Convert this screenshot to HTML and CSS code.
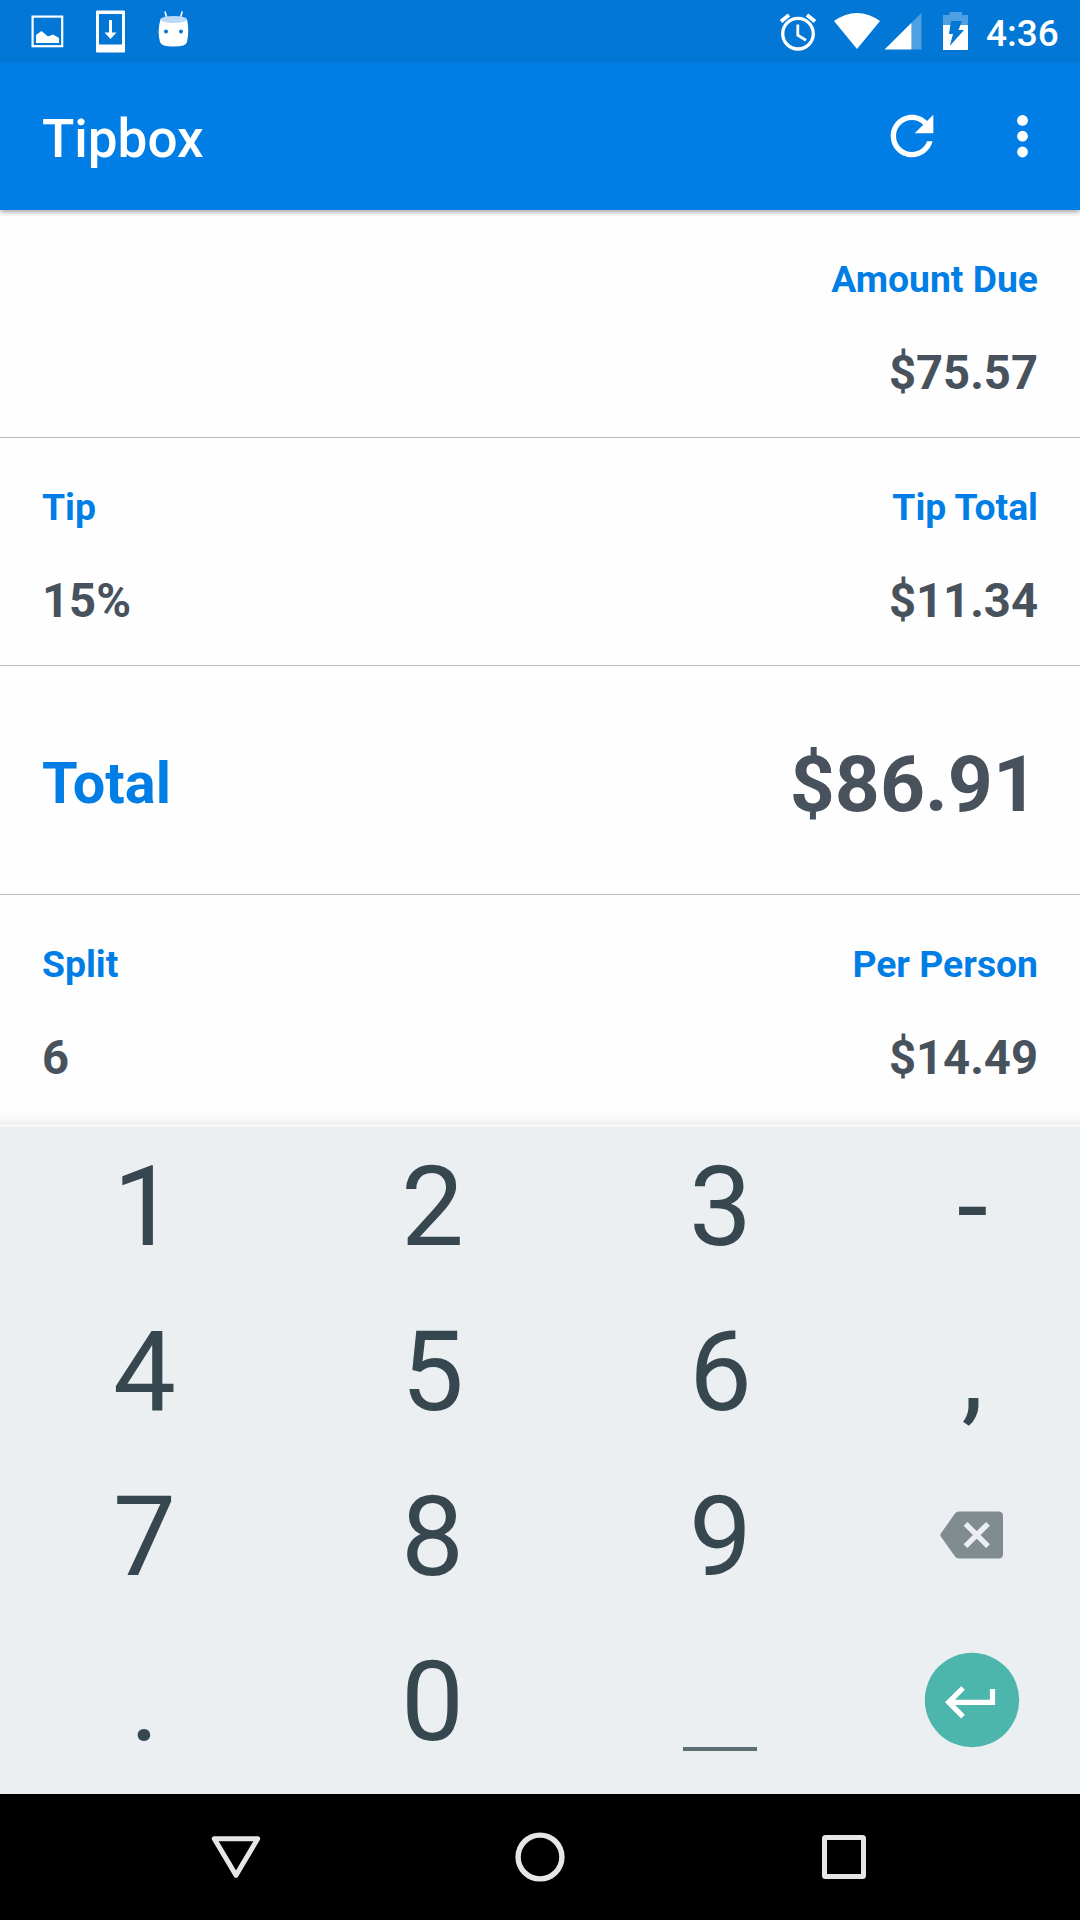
FILE: index.html
```html
<!DOCTYPE html>
<html lang="en">
<head>
<meta charset="utf-8">
<title>Tipbox</title>
<link rel="stylesheet" href="styles.css">
</head>
<body>
<div class="screen">
  <header class="header">
    <div class="status">
      <svg class="st-picture" width="34" height="63" viewBox="31 0 34 63">
        <rect x="32.6" y="16.6" width="29.6" height="29.6" fill="none" stroke="#fff" stroke-width="2.2"/>
        <path fill="#fff" d="M36 35L41.5 31L48 36.5L53 34.5L59 38V43H36Z"/>
      </svg>
      <svg class="st-download" width="30" height="63" viewBox="96 0 30 63">
        <path fill="#fff" fill-rule="evenodd" d="M97 10.5H124Q125 10.5 125 11.5V51.5Q125 52.5 124 52.5H97Q96 52.5 96 51.5V11.5Q96 10.5 97 10.5ZM99 14V44.5H122V14Z"/>
        <path fill="#fff" d="M109 20H112V32.5H116.5L110.5 39L104.5 32.5H109Z"/>
      </svg>
      <svg class="st-robot" width="32" height="63" viewBox="158 0 32 63">
        <path d="M165 11.5L167 19M182.3 11.5L180 19" stroke="#fff" stroke-width="1.6"/>
        <path fill="#fff" d="M160.5 19Q173.5 24 187 19Q189.5 31 187 42Q186 46.5 173.5 46.5Q161 46.5 160 42Q157 31 160.5 19Z"/>
        <ellipse cx="173.7" cy="19.5" rx="13.2" ry="3.4" fill="#bcdaf5"/>
        <circle cx="166" cy="31.5" r="2" fill="#0377d6"/>
        <circle cx="181" cy="31.5" r="2" fill="#0377d6"/>
      </svg>
      <svg class="st-alarm" width="36" height="63" viewBox="780 0 36 63">
        <g fill="none" stroke="#fff">
          <circle cx="798" cy="33.7" r="15.3" stroke-width="3.3"/>
          <path stroke-width="3.8" d="M781 21.5L789 15M807 15L815 21.5"/>
          <path stroke-width="2.8" d="M797.8 24.5V35.3L806 40.2"/>
        </g>
      </svg>
      <svg class="st-wifi" width="46" height="63" viewBox="834 0 46 63">
        <path fill="#fff" d="M834 21Q857 5 880 21L857 49Z"/>
      </svg>
      <svg class="st-signal" width="38" height="63" viewBox="884 0 38 63">
        <path fill="#fff" d="M884.5 49.5L911.5 22.8V49.5Z"/>
        <path fill="#fff" opacity=".3" d="M911.5 22.8L921.5 13V49.5H911.5Z"/>
      </svg>
      <svg class="st-battery" width="26" height="63" viewBox="943 0 26 63">
        <path fill="#fff" opacity=".3" d="M943 15H949.5V12H962V15H968V25H943Z"/>
        <path fill="#fff" d="M943 25H968V50H943Z"/>
        <path fill="#0377d6" d="M951 21H962L958.5 30H964L949.8 46L953 34H949Z"/>
      </svg>
      <span class="clock">4:36</span>
    </div>
    <div class="appbar">
      <h1 class="title">Tipbox</h1>
      <svg class="refresh" width="64" height="64" viewBox="0 0 24 24"><path fill="#fff" d="M17.65 6.35C16.2 4.9 14.21 4 12 4c-4.42 0-7.99 3.58-7.99 8s3.57 8 7.99 8c3.73 0 6.84-2.55 7.73-6h-2.08c-.82 2.33-3.04 4-5.65 4-3.31 0-6-2.69-6-6s2.69-6 6-6c1.66 0 3.14.69 4.22 1.78L13 11h7V4l-2.35 2.35z"/></svg>
      <svg class="more" width="13" height="64" viewBox="0 0 13 64"><g fill="#fff"><circle cx="6.5" cy="16.4" r="5.4"/><circle cx="6.5" cy="32.2" r="5.4"/><circle cx="6.5" cy="48" r="5.4"/></g></svg>
    </div>
  </header>

  <main class="rows">
    <section class="row">
      <div class="field"></div>
      <div class="field end"><span class="label">Amount Due</span><span class="value">$75.57</span></div>
    </section>
    <section class="row">
      <div class="field"><span class="label">Tip</span><span class="value">15%</span></div>
      <div class="field end"><span class="label">Tip Total</span><span class="value">$11.34</span></div>
    </section>
    <section class="row total">
      <span class="total-label">Total</span>
      <span class="total-value">$86.91</span>
    </section>
    <section class="row split">
      <div class="field"><span class="label">Split</span><span class="value">6</span></div>
      <div class="field end"><span class="label">Per Person</span><span class="value">$14.49</span></div>
    </section>
  </main>

  <div class="keypad">
    <span class="key">1</span><span class="key">2</span><span class="key">3</span><span class="key">-</span>
    <span class="key">4</span><span class="key">5</span><span class="key">6</span><span class="key">,</span>
    <span class="key">7</span><span class="key">8</span><span class="key">9</span>
    <span class="key icon backspace">
      <svg width="64" height="48" viewBox="0 0 64 48">
        <path fill="#808c90" d="M19 .5H58.5Q63 .5 63 5V43Q63 47.5 58.5 47.5H19Q16.5 47.5 15 45.5L.8 25.5Q-.2 24 .8 22.5L15 2.5Q16.5 .5 19 .5Z"/>
        <path stroke="#ebeff2" stroke-width="5.4" d="M25.5 12.8L48 35.2M48 12.8L25.5 35.2"/>
      </svg>
    </span>
    <span class="key">.</span><span class="key">0</span>
    <span class="key space"><span class="space-bar"></span></span>
    <span class="key icon">
      <svg width="96" height="96" viewBox="0 0 96 96">
        <circle cx="48" cy="48" r="47.2" fill="#4db6ac"/>
        <path fill="none" stroke="#fff" stroke-width="5.2" d="M68.5 37V50.3H26M39 36L24.7 50.3L39 64.6"/>
      </svg>
    </span>
  </div>

  <nav class="nav">
    <svg width="52" height="52" viewBox="0 0 52 52"><path fill="none" stroke="#e6e6e6" stroke-width="5" stroke-linejoin="round" d="M4.3 7.7H47.7L26 44.3Z"/></svg>
    <svg width="52" height="52" viewBox="0 0 52 52"><circle cx="26" cy="26" r="21.9" fill="none" stroke="#e6e6e6" stroke-width="5.4"/></svg>
    <svg width="52" height="52" viewBox="0 0 52 52"><rect x="6.5" y="6.5" width="39" height="39" rx="1" fill="none" stroke="#e6e6e6" stroke-width="5" stroke-linejoin="round"/></svg>
  </nav>
</div>
</body>
</html>
```
FILE: styles.css
```css
* { box-sizing: border-box; }

body {
  margin: 0;
  background: #fefefe;
  font-family: Roboto, "Liberation Sans", sans-serif;
}

svg { display: block; flex: none; }

.screen {
  width: 1080px;
  height: 1920px;
  display: flex;
  flex-direction: column;
  overflow: hidden;
}

/* Header */
.header {
  position: relative;
  flex: none;
  height: 210px;
  background: #007ee6;
  color: #fff;
  box-shadow: 0 2px 5px rgba(0, 0, 0, .36);
}

.status {
  display: flex;
  height: 63px;
  padding-left: 31px;
  background: #0377d6;
}

.st-download { margin-left: 31px; }
.st-robot { margin-left: 32px; }
.st-alarm { margin-left: 590px; }
.st-wifi { margin-left: 18px; }
.st-signal { margin-left: 4px; }
.st-battery { margin-left: 21px; }

.clock {
  margin-left: 17px;
  font-size: 37px;
  font-weight: 500;
  line-height: 67px;
}

.appbar {
  display: flex;
  align-items: center;
  height: 147px;
  padding: 0 51px 2px 42px;
}

.title {
  margin: 0;
  padding-top: 6px;
  font-size: 53px;
  font-weight: 500;
  line-height: 64px;
}

.refresh { margin-left: auto; }
.more { margin-left: 72px; }

/* Bill rows */
.rows {
  flex: none;
  height: 917px;
  display: flex;
  flex-direction: column;
  background: #fefefe;
}

.row {
  display: flex;
  justify-content: space-between;
  height: 228px;
  padding: 47px 42px 0;
  border-bottom: 1px solid #b9bbbd;
}

.field {
  display: flex;
  flex-direction: column;
  gap: 44px;
}

.end { align-items: flex-end; }

.label {
  color: #007ee6;
  font-size: 37.3px;
  font-weight: 700;
  line-height: 44px;
}

.value {
  color: #47525d;
  font-size: 47.2px;
  font-weight: 700;
  line-height: 56px;
}

.total {
  height: 229px;
  align-items: center;
  padding-top: 7px;
}

.total-label {
  color: #007ee6;
  font-size: 57.6px;
  font-weight: 700;
}

.total-value {
  color: #47525d;
  font-size: 78.6px;
  font-weight: 700;
}

.split {
  height: 232px;
  border-bottom: 3px solid #f5f6f7;
  background: linear-gradient(to top, #eeeeef, #f9f9f9 5px, #fefefe 12px);
}

/* Keypad */
.keypad {
  flex: none;
  display: grid;
  grid-template-columns: 288px 288px 288px 216px;
  grid-template-rows: repeat(4, 165px);
  height: 667px;
  background: #ebeff2;
  color: #37474f;
}

.key {
  display: flex;
  align-items: center;
  justify-content: center;
  padding: 0 0 6px 1px;
  font-size: 112px;
  line-height: 132px;
}

.icon { padding: 0 0 9px; }
.backspace { padding-bottom: 10px; }

.space {
  align-items: flex-end;
  padding: 0 0 36px;
}

.space-bar {
  width: 74px;
  height: 4px;
  background: #5f6e74;
}

/* System navigation */
.nav {
  flex: none;
  display: flex;
  justify-content: center;
  gap: 252px;
  height: 126px;
  padding-top: 37px;
  background: #000;
}
```
